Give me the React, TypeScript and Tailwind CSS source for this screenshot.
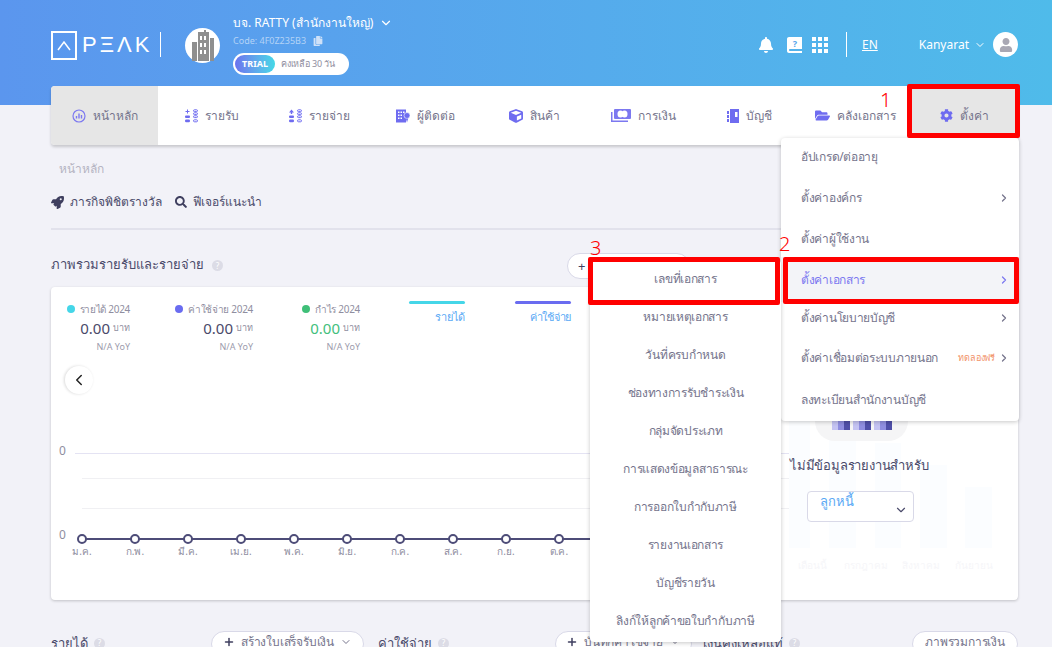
import { FaBell, FaCog, FaCopy, FaCube, FaFolderOpen, FaRocket, FaSearch, FaUser } from 'react-icons/fa';
import { ChevronDown, ChevronLeft, ChevronRight, Plus } from 'lucide-react';

const font = { fontFamily: '"Noto Sans", "Liberation Sans", sans-serif' };

function HomeIcon() {
  return (
    <svg width="14" height="14" viewBox="0 0 14 14" fill="none" stroke="#7c78f0">
      <circle cx="7" cy="7" r="6" strokeWidth="1.2" />
      <path d="M4.5 9.5V7M7 9.5V4.5M9.5 9.5V6" strokeWidth="1.4" />
    </svg>
  );
}

function ListIcon({ arrow }: { arrow?: boolean }) {
  return (
    <svg width="13" height="14" viewBox="0 0 13 14" fill="#6f6cf0">
      {arrow ? <path d="M2.5 0.5L5 3.5H3.2V5H1.8V3.5H0Z" /> : <path d="M2 0.5H3V2H4.5V3H3V4.5H2V3H0.5V2H2Z" />}
      <rect x="0" y="6.5" width="5" height="2.6" rx="1" />
      <rect x="0" y="10.5" width="5" height="2.8" rx="1.2" />
      <g fill="none" stroke="#6f6cf0" strokeWidth="1">
        <rect x="8.5" y="0.8" width="4" height="1.8" rx="0.9" />
        <rect x="8.5" y="3.8" width="4" height="1.8" rx="0.9" />
        <rect x="8.5" y="6.8" width="4" height="1.8" rx="0.9" />
        <rect x="8.5" y="10.8" width="4" height="2" rx="1" />
      </g>
    </svg>
  );
}

function ContactIcon() {
  return (
    <svg width="14" height="14" viewBox="0 0 14 14" fill="#6f6cf0">
      <path d="M0 0.5H10V13.5H0Z" />
      <path d="M2 2.5H3.5V4H2ZM4.5 2.5H6V4H4.5ZM7 2.5H8.5V4H7ZM2 5.5H3.5V7H2ZM4.5 5.5H6V7H4.5ZM2 8.5H3.5V10H2ZM4.5 8.5H6V10H4.5Z" fill="#fff" />
      <circle cx="11" cy="6.5" r="3" stroke="#fff" strokeWidth="0.6" />
      <path d="M9.8 9.5H12.2L11 13.5Z" />
    </svg>
  );
}

function MoneyIcon() {
  return (
    <svg width="20" height="14" viewBox="0 0 20 14" fill="#7c78f0">
      <path d="M0 3H1.5V11.5H17V13H0Z" />
      <rect x="3" y="0" width="17" height="10" rx="1" />
      <ellipse cx="9.5" cy="5" rx="3" ry="3.6" fill="#fff" />
      <ellipse cx="13.5" cy="5" rx="3" ry="3.6" fill="#fff" />
    </svg>
  );
}

function BookIcon() {
  return (
    <svg width="12" height="14" viewBox="0 0 12 14" fill="#6f6cf0">
      <path d="M3 0H12V14H3Z" />
      <path d="M0 2H2V5H0ZM0 6H2V9H0ZM0 10H2V13H0Z" />
      <path d="M8 3H10.5V8H8Z" fill="#fff" />
    </svg>
  );
}

const navItems = [
  { label: 'หน้าหลัก', icon: <HomeIcon />, cls: 'w-[107px] pl-[21px] bg-[#e6e6e6] rounded-l' },
  { label: 'รายรับ', icon: <ListIcon />, cls: 'w-[111px] pl-[27px]' },
  { label: 'รายจ่าย', icon: <ListIcon arrow />, cls: 'w-[106px] pl-[20px]' },
  { label: 'ผู้ติดต่อ', icon: <ContactIcon />, cls: 'w-[110px] pl-[21px]' },
  { label: 'สินค้า', icon: <FaCube className="text-[#6f6cf0] text-[14px]" />, cls: 'w-[104px] pl-[24px]' },
  { label: 'การเงิน', icon: <MoneyIcon />, cls: 'w-[114px] pl-[22px]' },
  { label: 'บัญชี', icon: <BookIcon />, cls: 'w-[90px] pl-[24px]' },
  { label: 'คลังเอกสาร', icon: <FaFolderOpen className="text-[#6f6cf0] text-[15px]" />, cls: 'w-[115px] pl-[22px]' },
  { label: 'ตั้งค่า', icon: <FaCog className="text-[#6f6cf0] text-[13px]" />, cls: 'w-[110px] pl-[32px] bg-[#e6e6e6]' },
];

const months = ['ม.ค.', 'ก.พ.', 'มี.ค.', 'เม.ย.', 'พ.ค.', 'มิ.ย.', 'ก.ค.', 'ส.ค.', 'ก.ย.', 'ต.ค.', 'พ.ย.', 'ธ.ค.'];

const settingsMenu = [
  { label: 'อัปเกรด/ต่ออายุ', h: 'h-[37px]' },
  { label: 'ตั้งค่าองค์กร', arrow: true, h: 'h-[45px]' },
  { label: 'ตั้งค่าผู้ใช้งาน', h: 'h-[37px]' },
  { label: 'ตั้งค่าเอกสาร', arrow: true, active: true, h: 'h-[45px]' },
  { label: 'ตั้งค่านโยบายบัญชี', arrow: true, h: 'h-[32px]' },
  { label: 'ตั้งค่าเชื่อมต่อระบบภายนอก', arrow: true, tag: 'ทดลองฟรี', h: 'h-[48px]' },
  { label: 'ลงทะเบียนสำนักงานบัญชี', h: 'h-[35px]' },
];

const docMenu = [
  'เลขที่เอกสาร',
  'หมายเหตุเอกสาร',
  'วันที่ครบกำหนด',
  'ช่องทางการรับชำระเงิน',
  'กลุ่มจัดประเภท',
  'การแสดงข้อมูลสาธารณะ',
  'การออกใบกำกับภาษี',
  'รายงานเอกสาร',
  'บัญชีรายวัน',
  'ลิงก์ให้ลูกค้าขอใบกำกับภาษี',
];

function Stat({ label, dot, w, green }: { label: string; dot: string; w: string; green?: boolean }) {
  return (
    <div className={`${w} flex flex-col items-end`}>
      <div className="flex h-[16px] items-center gap-[5px] whitespace-nowrap text-[10px] tracking-[-0.3px] text-[#8f8ea0]">
        <span className={`h-[8px] w-[8px] rounded-full ${dot}`} />
        {label}
      </div>
      <div className="mt-[1px] flex h-[20px] items-center gap-[3px] whitespace-nowrap">
        <span className={`text-[15px] ${green ? 'text-[#42c07c]' : 'text-[#4a4a6a]'}`}>0.00</span>
        <span className="text-[9px] text-[#8f8ea0]">บาท</span>
      </div>
      <div className="mt-[2px] h-[14px] text-[9px] leading-[14px] text-[#9c9bac]">N/A YoY</div>
    </div>
  );
}

function Chart() {
  const xs = months.map((_, i) => 31 + i * 53);
  return (
    <svg width="738" height="206" viewBox="0 0 738 206" className="block">
      <line x1="24" x2="738" y1="59.5" y2="59.5" stroke="#e4e3f3" />
      <line x1="31" x2="738" y1="84.5" y2="84.5" stroke="#f0f0f3" />
      <line x1="31" x2="738" y1="114.5" y2="114.5" stroke="#f0f0f3" />
      <line x1="31" x2="614" y1="145" y2="145" stroke="#4d4c78" strokeWidth="2" />
      <text x="8" y="61" fontSize="12" fill="#8f8ea0">0</text>
      <text x="8" y="145" fontSize="12" fill="#8f8ea0">0</text>
      {xs.map((x, i) => (
        <g key={months[i]}>
          <circle cx={x} cy="145" r="4" fill="#fff" stroke="#4d4c78" strokeWidth="2" />
          <text x={x} y="161" fontSize="10" fill="#8f8ea0" textAnchor="middle">{months[i]}</text>
        </g>
      ))}
    </svg>
  );
}

function PillButton({ label, w }: { label: string; w: string }) {
  return (
    <div className={`${w} flex h-[26px] items-center justify-center gap-[6px] whitespace-nowrap rounded-full border border-[#d9d9e8] bg-white pb-[4px] text-[12px] tracking-[-0.2px] text-[#75748c]`}>
      <Plus size={12} strokeWidth={3} className="text-[#3f3f5f]" />
      {label}
      <ChevronDown size={12} />
    </div>
  );
}

function Help() {
  return <span className="flex h-[11px] w-[11px] items-center justify-center rounded-full bg-[#dcdce6] text-[8px] text-white">?</span>;
}

export default function App() {
  return (
    <div style={font} className="relative h-[647px] w-full overflow-hidden bg-[#f2f2f8]">
      {/* Header */}
      <div className="flex h-[105px] items-start justify-between bg-gradient-to-r from-[#5b96ee] to-[#4fbbea] pl-[51px] pr-[34px]">
        <div className="flex items-start">
          <div className="mt-[31px] flex h-[29px] w-[26px] items-center justify-center border-2 border-white">
            <svg width="14" height="10" viewBox="0 0 14 10" fill="none" stroke="#fff" strokeWidth="1.5">
              <path d="M1 9L7 1L13 9" />
            </svg>
          </div>
          <div className="ml-[5px] mt-[31px] flex h-[28px] w-[65px] items-center whitespace-nowrap text-[22px] leading-none tracking-[3px] text-white" style={{ fontFamily: '"Liberation Sans", sans-serif' }}>PΞΛK</div>
          <div className="ml-[13px] mt-[32px] h-[25px] w-px bg-white" />
          <div className="ml-[24px] mt-[28px] flex h-[35px] w-[35px] items-center justify-center rounded-full bg-white">
            <svg width="22" height="31" viewBox="0 0 22 31" fill="#8f8f8f">
              <path d="M0 12H5V31H0ZM6 2H12V0H14V2H17V31H6ZM18 8H22V31H18Z" />
              <path d="M8 6H10V10H8ZM12 6H14V10H12ZM8 13H10V17H8ZM12 13H14V17H12ZM8 20H10V24H8ZM12 20H14V24H12Z" fill="#fff" />
            </svg>
          </div>
          <div className="ml-[13px] mt-[14px] flex flex-col items-start">
            <div className="flex h-[18px] items-center whitespace-nowrap text-[12px] text-white">
              บจ. RATTY (สำนักงานใหญ่)
              <ChevronDown size={14} className="ml-[6px]" />
            </div>
            <div className="mt-[1px] flex h-[15px] items-center whitespace-nowrap text-[9px] text-[#b4d3f6]">
              Code: 4F0Z235B3
              <FaCopy className="ml-[7px] text-[10px] text-[#cfe1f8]" />
            </div>
            <div className="mt-[5px] flex h-[22px] w-[116px] items-center rounded-full bg-white pl-[2px]">
              <span className="flex h-[18px] w-[40px] items-center justify-center rounded-full bg-gradient-to-r from-[#6b72ee] to-[#43d8e6] text-[9px] font-bold text-white">TRIAL</span>
              <span className="ml-[6px] whitespace-nowrap text-[9px] tracking-[-0.2px] text-[#8f8ea0]">คงเหลือ 30 วัน</span>
            </div>
          </div>
        </div>
        <div className="mt-[32px] flex items-center text-white">
          <FaBell className="text-[16px]" />
          <svg width="15" height="16" viewBox="0 0 15 16" className="ml-[13px]">
            <path d="M2 0H15V12H3C1.6 12 1.6 14 3 14H15V16H2C0.9 16 0 15 0 14V2C0 0.9 0.9 0 2 0Z" fill="#fff" />
            <text x="8" y="9.5" fontSize="9" fontWeight="700" fill="#57a6ec" textAnchor="middle">?</text>
          </svg>
          <div className="ml-[10px] grid grid-cols-3 gap-[2px]">
            {Array.from({ length: 9 }).map((_, i) => (
              <span key={i} className="h-[4px] w-[4px] bg-white" />
            ))}
          </div>
          <div className="ml-[18px] h-[25px] w-px bg-white" />
          <span className="ml-[15px] text-[12px] underline">EN</span>
          <span className="ml-[41px] text-[12px]">Kanyarat</span>
          <ChevronDown size={12} className="ml-[5px]" />
          <div className="ml-[7px] flex h-[25px] w-[25px] items-center justify-center rounded-full bg-white">
            <FaUser className="text-[14px] text-[#a9a8b4]" />
          </div>
        </div>
      </div>

      <div className="px-[51px]">
        {/* Nav */}
        <div className="-mt-[19px] relative flex h-[59px] w-[967px] rounded bg-white shadow-[0_2px_3px_rgba(0,0,0,0.18)]">
          {navItems.map((item) => (
            <div key={item.label} className={`${item.cls} flex shrink-0 items-center gap-[7px] whitespace-nowrap text-[12px] text-[#75748c]`}>
              {item.icon}
              {item.label}
            </div>
          ))}
        </div>

        <div className="ml-[8px] mt-[15px] h-[18px] text-[12px] leading-[18px] text-[#b5b4c2]">หน้าหลัก</div>
        <div className="mt-[14px] flex h-[20px] items-center text-[12px] text-[#4a4a6a]">
          <FaRocket className="text-[13px] text-[#3f3f5f]" />
          <span className="ml-[6px]">ภารกิจพิชิตรางวัล</span>
          <FaSearch className="ml-[13px] text-[12px] text-[#3f3f5f]" />
          <span className="ml-[6px]">ฟีเจอร์แนะนำ</span>
        </div>
        <div className="mt-[16px] h-[2px] w-[967px] bg-[#e2e2ec]" />

        {/* Overview title */}
        <div className="mt-[22px] flex h-[27px] w-[967px] items-center">
          <span className="pb-[1px] text-[13px] text-[#4a4a6a]">ภาพรวมรายรับและรายจ่าย</span>
          <span className="ml-[8px]"><Help /></span>
          <div className="ml-[344px] h-[26px] w-[123px] rounded-full border border-[#d9d9e8] bg-white pl-[10px] text-[13px] leading-[24px] text-[#3f3f5f]">+</div>
        </div>

        {/* Overview card */}
        <div className="mt-[8px] flex h-[313px] w-[967px] rounded bg-white shadow-[0_1px_3px_rgba(0,0,0,0.2)]">
          <div className="w-[738px] shrink-0">
            <div className="flex pl-[16px] pt-[14px]">
              <Stat label="รายได้ 2024" dot="bg-[#45d6e8]" w="w-[63px]" />
              <div className="ml-[49px]"><Stat label="ค่าใช้จ่าย 2024" dot="bg-[#6a6cf0]" w="w-[74px]" /></div>
              <div className="ml-[50px]"><Stat label="กำไร 2024" dot="bg-[#3fbf78]" w="w-[57px]" green /></div>
              <div className="ml-[49px] w-[56px] text-right">
                <div className="h-[3px] rounded-full bg-[#45d6e8]" />
                <div className="mt-[5px] text-[11px] tracking-[-0.3px] text-[#5aa9f5]">รายได้</div>
              </div>
              <div className="ml-[50px] w-[56px] text-right">
                <div className="h-[3px] rounded-full bg-[#6a6cf0]" />
                <div className="mt-[5px] text-[11px] tracking-[-0.3px] text-[#5aa9f5]">ค่าใช้จ่าย</div>
              </div>
            </div>
            <div className="ml-[14px] mt-[12px] flex h-[28px] w-[28px] items-center justify-center rounded-full bg-white shadow-[-1px_0_3px_rgba(0,0,0,0.15)]">
              <ChevronLeft size={18} className="text-[#222]" />
            </div>
            <Chart />
          </div>

          {/* No data panel */}
          <div className="relative flex-1 pl-[26px] pt-[113px]">
            <svg width="229" height="290" viewBox="0 0 229 290" className="absolute left-0 top-0" fill="#fbfdff">
              <rect x="0" y="120" width="21" height="141" />
              <rect x="40" y="120" width="27" height="141" />
              <rect x="86" y="156" width="26" height="105" />
              <rect x="131" y="178" width="27" height="83" />
              <rect x="176" y="200" width="27" height="61" />
              <g fontSize="10" fill="#f6f6f9" textAnchor="middle">
                <text x="23" y="282">เดือนนี้</text>
                <text x="77" y="282">กรกฎาคม</text>
                <text x="132" y="282">สิงหาคม</text>
                <text x="185" y="282">กันยายน</text>
              </g>
            </svg>
            <div className="relative flex h-[41px] w-[93px] items-end justify-center gap-[3px] rounded-b-[20px] bg-[#f5f5f6] pb-[11px]">
              {[0, 1, 2].map((n) => (
                <div key={n} className="flex">
                  <span className="h-[9px] w-[6px] bg-[#c4c3f2]" />
                  <span className="h-[9px] w-[6px] bg-[#8f8ee0]" />
                  <span className="h-[9px] w-[6px] bg-[#4f4fa8]" />
                </div>
              ))}
            </div>
            <div className="relative -ml-[25px] mt-[14px] h-[20px] whitespace-nowrap text-[13px] leading-[20px] tracking-[-0.2px] text-[#4a4a6a]">ไม่มีข้อมูลรายงานสำหรับ</div>
            <div className="relative -ml-[8px] mt-[16px] flex h-[31px] w-[107px] items-start justify-between rounded border border-[#d9d9e8] bg-white pl-[12px] pr-[5px] text-[13px] text-[#5aa9f5]">
              ลูกหนี้
              <ChevronDown size={14} className="mt-[11px] text-[#4a4a6a]" />
            </div>
          </div>
        </div>

        {/* Bottom row */}
        <div className="mt-[31px] flex w-[967px] items-start">
          <div className="flex w-[313px] items-start justify-between">
            <div className="flex items-center gap-[6px] pt-[1px] text-[13px] leading-[22px] text-[#4a4a6a]">รายได้ <Help /></div>
            <PillButton label="สร้างใบเสร็จรับเงิน" w="w-[153px]" />
          </div>
          <div className="ml-[14px] flex w-[314px] items-start">
            <div className="flex w-[177px] items-center gap-[6px] pt-[1px] text-[13px] leading-[22px] text-[#4a4a6a]">ค่าใช้จ่าย <Help /></div>
            <PillButton label="บันทึกค่าใช้จ่าย" w="w-[137px]" />
          </div>
          <div className="ml-[11px] flex flex-1 items-start justify-between">
            <div className="flex items-center gap-[6px] whitespace-nowrap pt-[1px] text-[13px] leading-[22px] text-[#4a4a6a]">เงินคงเหลือแท้ <Help /></div>
            <div className="flex h-[26px] w-[106px] items-center justify-center whitespace-nowrap rounded-full border border-[#d9d9e8] bg-white pb-[4px] text-[12px] tracking-[-0.2px] text-[#75748c]">ภาพรวมการเงิน</div>
          </div>
        </div>
      </div>

      {/* Settings dropdown */}
      <div className="absolute left-[781px] top-[138px] w-[238px] rounded bg-white pb-[4px] shadow-[0_1px_4px_rgba(0,0,0,0.22)]">
        {settingsMenu.map((m) => (
          <div key={m.label} className={`${m.h} flex items-center justify-between pl-[20px] pr-[9px] text-[12px] tracking-[-0.3px] ${m.active ? 'bg-[#f3f4f8] text-[#7c78f0]' : 'text-[#75748c]'}`}>
            <span className="whitespace-nowrap">{m.label}</span>
            {m.arrow && (
              <span className="flex items-center gap-[3px]">
                {m.tag && <span className="whitespace-nowrap text-[9px] tracking-[-0.2px] text-[#f2936a]">{m.tag}</span>}
                <ChevronRight size={12} strokeWidth={2.5} />
              </span>
            )}
          </div>
        ))}
      </div>

      {/* Document settings submenu */}
      <div className="absolute left-[590px] top-[260px] w-[191px] rounded bg-white pb-[2px] shadow-[0_1px_4px_rgba(0,0,0,0.22)]">
        {docMenu.map((label) => (
          <div key={label} className="flex h-[38px] items-center justify-center whitespace-nowrap text-[12px] tracking-[-0.3px] text-[#75748c]">{label}</div>
        ))}
      </div>

      {/* Red annotations */}
      <div className="absolute left-[907px] top-[84px] h-[54px] w-[113px] rounded-[2px] border-[5px] border-[#ff0000]" />
      <div className="absolute left-[783px] top-[257px] h-[47px] w-[236px] rounded-[2px] border-[5px] border-[#ff0000]" />
      <div className="absolute left-[588px] top-[257px] h-[48px] w-[192px] rounded-[2px] border-[5px] border-[#ff0000]" />
      <span className="absolute left-[880px] top-[87px] text-[20px] font-light leading-[26px] text-[#ff0000]">1</span>
      <span className="absolute left-[779px] top-[231px] text-[20px] font-light leading-[26px] text-[#ff0000]">2</span>
      <span className="absolute left-[590px] top-[235px] text-[20px] font-light leading-[26px] text-[#ff0000]">3</span>
    </div>
  );
}
